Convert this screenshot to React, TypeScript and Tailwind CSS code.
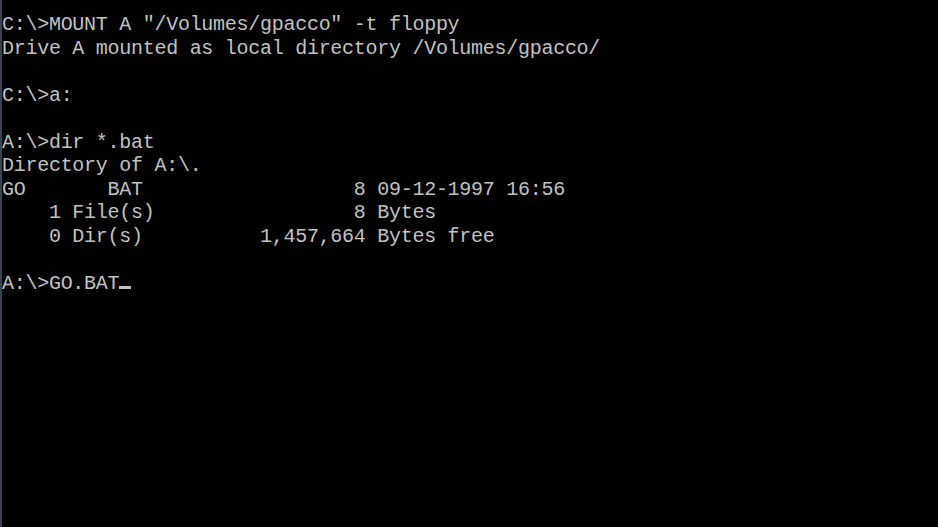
const LINES = [
  'C:\\>MOUNT A "/Volumes/gpacco" -t floppy',
  "Drive A mounted as local directory /Volumes/gpacco/",
  "",
  "C:\\>a:",
  "",
  "A:\\>dir *.bat",
  "Directory of A:\\.",
  "GO       BAT                  8 09-12-1997 16:56",
  "    1 File(s)                 8 Bytes",
  "    0 Dir(s)          1,457,664 Bytes free",
  "",
];

export default function App() {
  return (
    <div className="w-[938px] h-[527px] overflow-hidden bg-black border-l-2 border-[#3a4350]">
      <div
        className="pt-[13px] text-[20px] leading-[23.5px] tracking-[-0.275px] text-[#c2c2c2] whitespace-pre"
        style={{ fontFamily: '"Liberation Mono", "DejaVu Sans Mono", monospace' }}
      >
        {LINES.map((line, i) => (
          <div key={i} className="h-[23.5px]">
            {line}
          </div>
        ))}
        {/* prompt with cursor */}
        <div className="h-[23.5px]">
          A:\&gt;GO.BAT
          <span className="inline-block w-[11.7px] h-[3px] bg-[#c2c2c2] align-baseline" />
        </div>
      </div>
    </div>
  );
}
